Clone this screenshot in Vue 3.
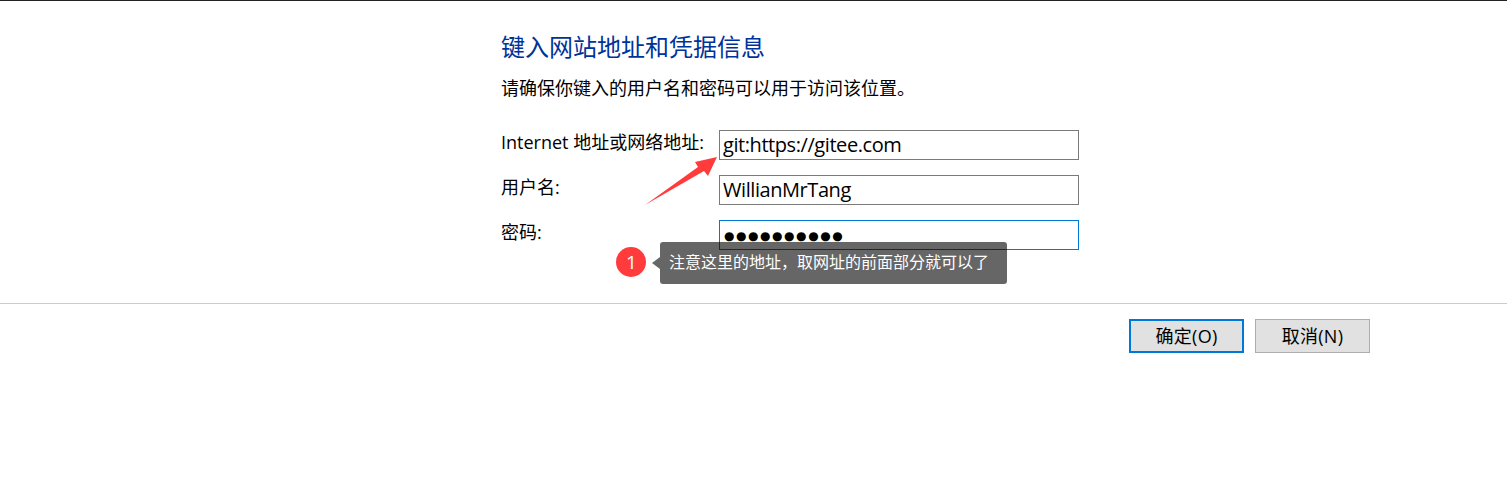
<template>
  <div class="page">
    <div class="content">
      <h1 class="title">键入网站地址和凭据信息</h1>
      <p class="desc">请确保你键入的用户名和密码可以用于访问该位置。</p>
      <div class="form">
        <div class="row" v-for="f in fields" :key="f.label">
          <label class="label">{{ f.label }}</label>
          <div class="input" :class="{ active: f.active, dots: f.active }">{{ f.value }}</div>
        </div>
      </div>
    </div>

    <svg class="arrow" width="90" height="60" viewBox="0 0 90 60">
      <path d="M0 51 L53 13 L50 8 L72 3 L63 22 L59 17 Z" fill="#ff3b3b" />
    </svg>
    <div class="step">1</div>
    <div class="tip">注意这里的地址，取网址的前面部分就可以了</div>

    <div class="footer">
      <button class="btn primary">确定(O)</button>
      <button class="btn">取消(N)</button>
    </div>
  </div>
</template>

<script setup>
const fields = [
  { label: 'Internet 地址或网络地址:', value: 'git:https://gitee.com' },
  { label: '用户名:', value: 'WillianMrTang' },
  { label: '密码:', value: '●●●●●●●●●●', active: true }
]
</script>

<style scoped>
.page {
  position: relative;
  height: 500px;
  background: #fff;
  border-top: 1px solid #222;
  box-sizing: border-box;
  overflow: hidden;
  font-family: "Open Sans", "Noto Sans CJK SC", sans-serif;
  color: #000;
}

.content {
  padding: 29px 0 0 501px;
  height: 273px;
  box-sizing: border-box;
}

.title {
  margin: 0;
  font-size: 24px;
  font-weight: 400;
  line-height: 34px;
  color: #003399;
}

.desc {
  margin: 12px 0 0;
  font-size: 18px;
  line-height: 24px;
}

.form {
  display: flex;
  flex-direction: column;
  gap: 15px;
  margin-top: 30px;
}

.row {
  display: flex;
  align-items: flex-start;
}

.label {
  width: 218px;
  font-size: 18px;
  line-height: 24px;
}

.input {
  width: 360px;
  height: 30px;
  box-sizing: border-box;
  border: 1px solid #7a7a7a;
  padding-left: 3px;
  font-size: 20px;
  letter-spacing: -0.43px;
  line-height: 28px;
  white-space: nowrap;
}

.input.active {
  border-color: #0078d7;
}

.input.dots {
  font-family: "DejaVu Sans", sans-serif;
  font-size: 12px;
  letter-spacing: 1.55px;
  line-height: 30px;
  padding-left: 4px;
}

.arrow {
  position: absolute;
  left: 645px;
  top: 153px;
}

.step {
  position: absolute;
  left: 616px;
  top: 246px;
  width: 30px;
  height: 30px;
  box-sizing: border-box;
  padding-left: 1px;
  border-radius: 50%;
  background: #ff3b3b;
  color: #fff;
  font-size: 19px;
  line-height: 30px;
  text-align: center;
}

.tip {
  position: absolute;
  left: 660px;
  top: 241px;
  width: 347px;
  height: 42px;
  box-sizing: border-box;
  padding-left: 9px;
  border-radius: 3px;
  background: rgba(0, 0, 0, 0.6);
  color: #fff;
  font-size: 16px;
  line-height: 41px;
  white-space: nowrap;
}

.tip::before {
  content: "";
  position: absolute;
  left: -8px;
  top: 15px;
  border-style: solid;
  border-width: 6px 8px 6px 0;
  border-color: transparent rgba(0, 0, 0, 0.6) transparent transparent;
}

.footer {
  display: flex;
  justify-content: flex-end;
  gap: 11px;
  height: 60px;
  padding: 15px 137px 0 0;
  box-sizing: border-box;
  border-top: 1px solid #ccc;
  margin-top: 29px;
}

.btn {
  width: 115px;
  height: 34px;
  box-sizing: border-box;
  border: 1px solid #adadad;
  background: #e1e1e1;
  font-family: inherit;
  font-size: 18px;
  letter-spacing: 0.3px;
  color: #000;
  padding: 0 0 2px;
}

.btn.primary {
  border: 2px solid #0078d7;
}
</style>
